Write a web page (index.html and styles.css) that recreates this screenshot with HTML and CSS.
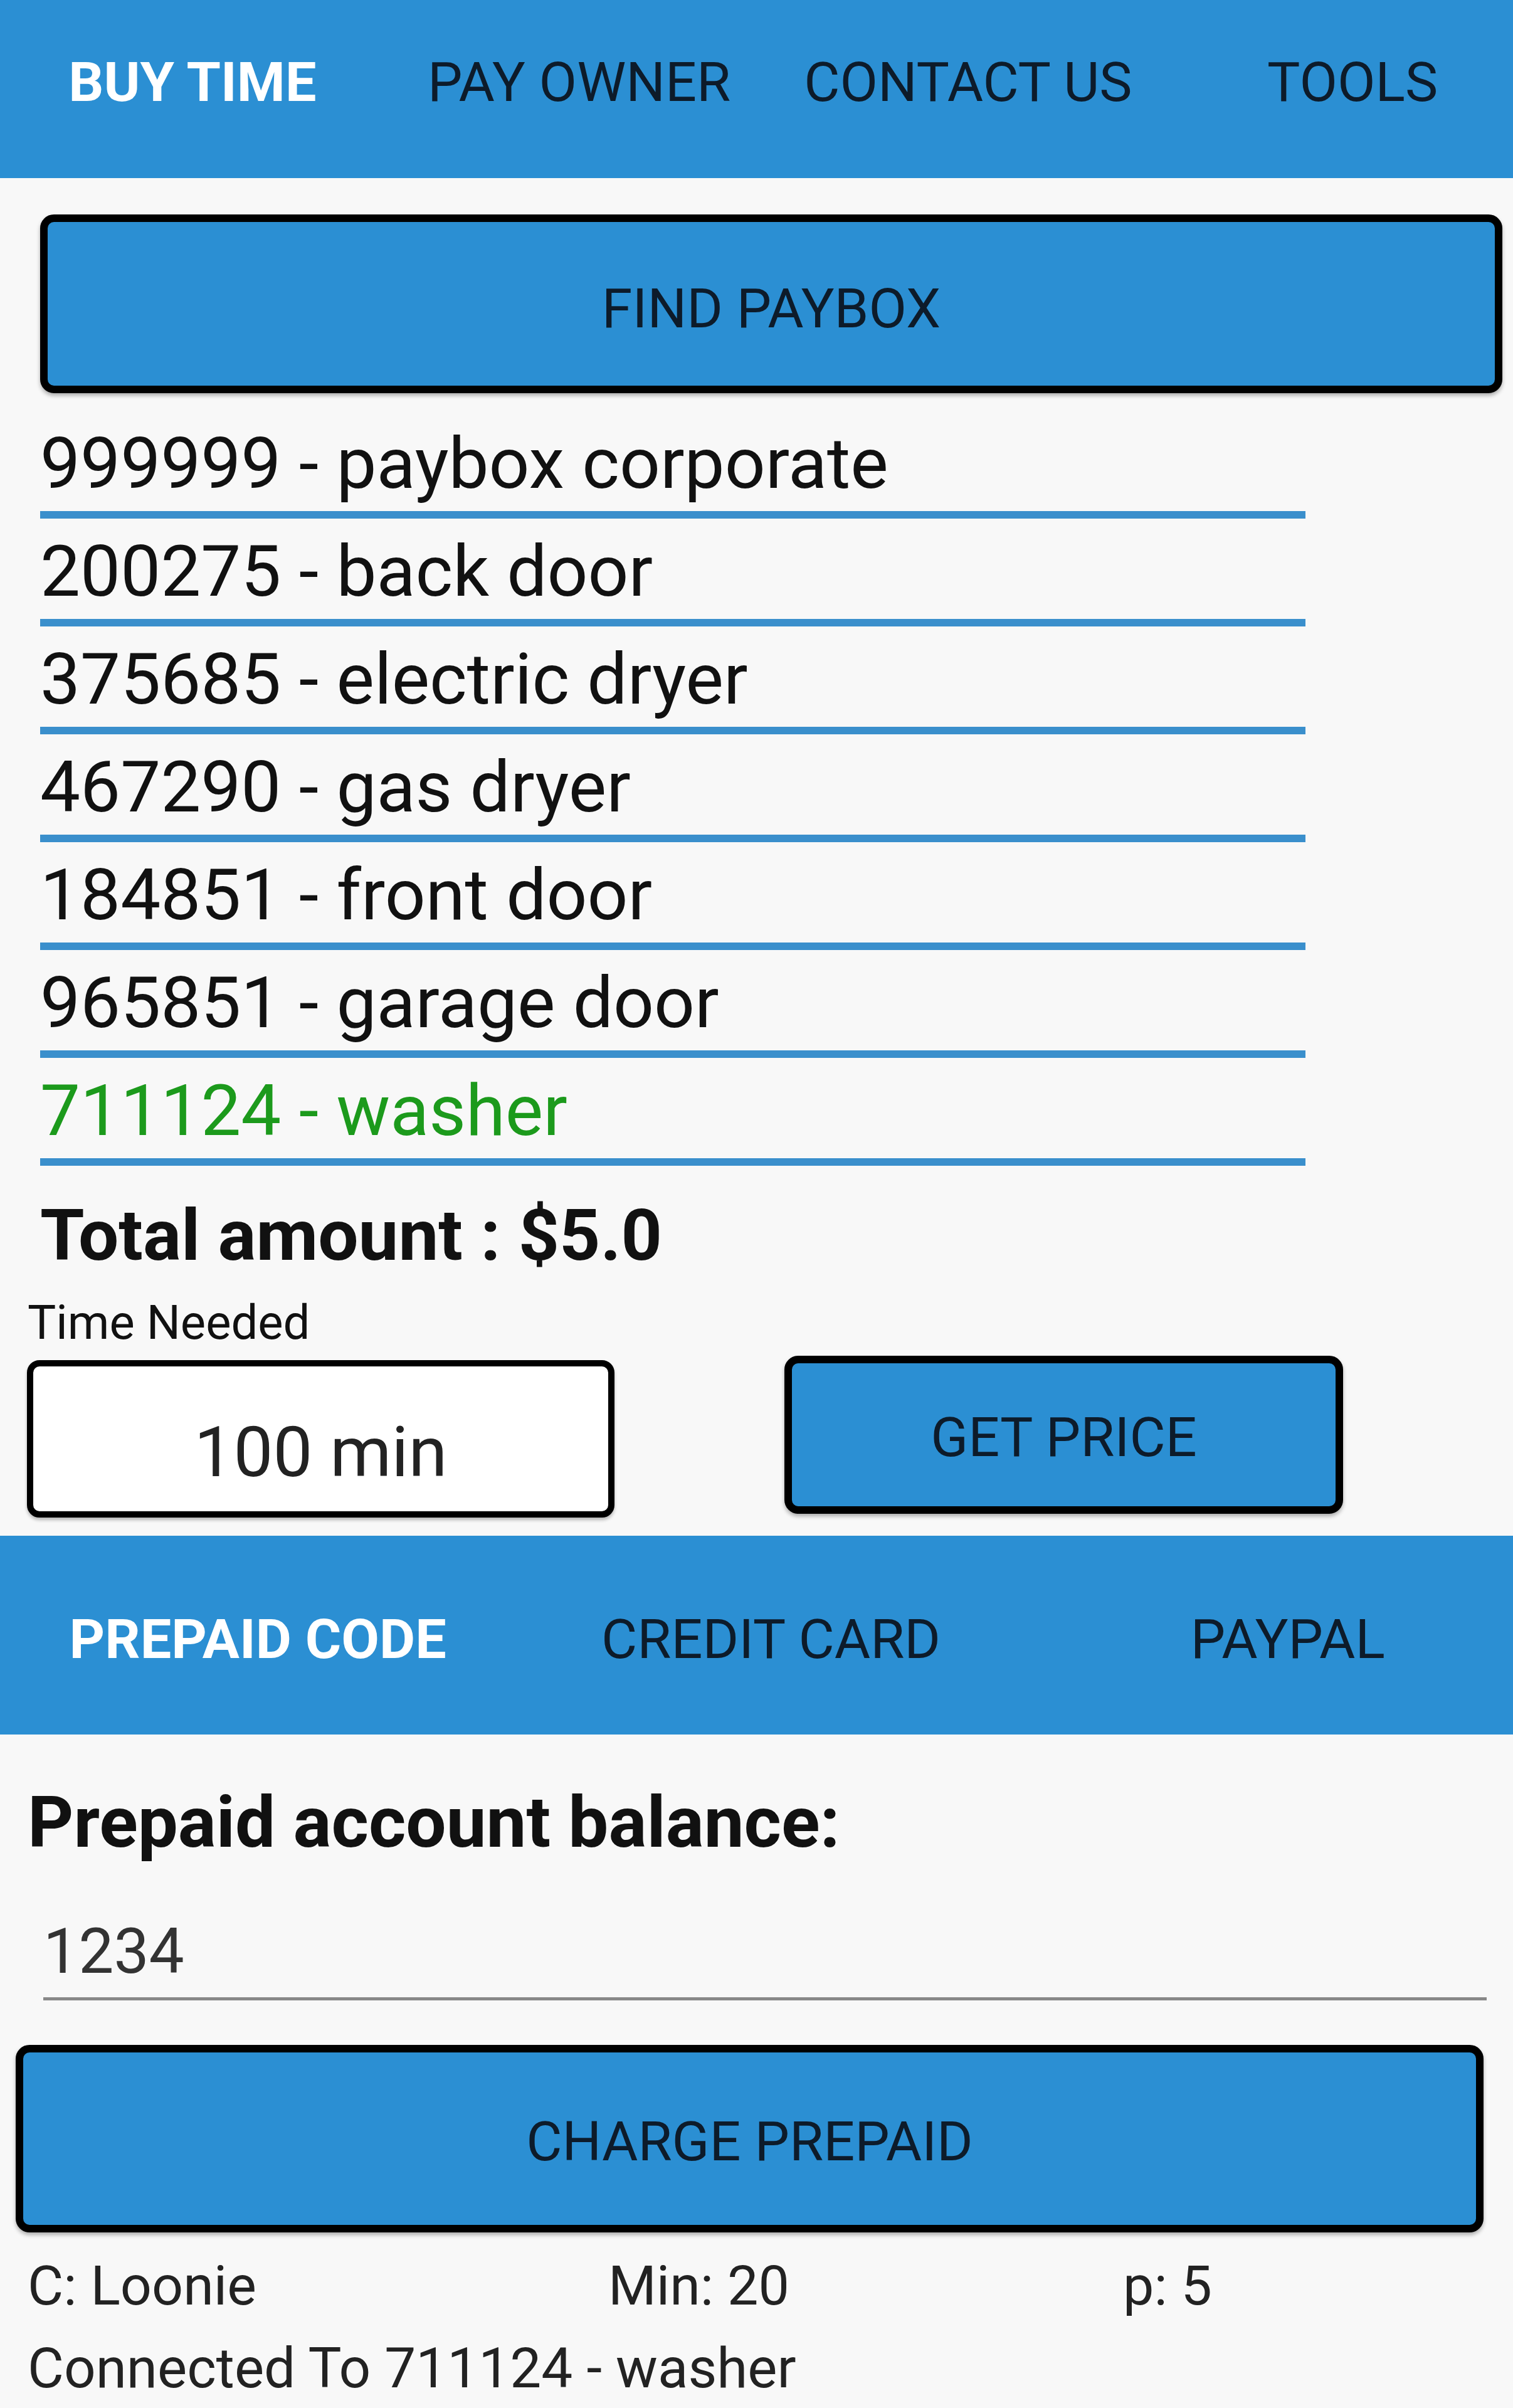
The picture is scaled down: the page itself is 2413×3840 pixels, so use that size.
FILE: index.html
```html
<!DOCTYPE html>
<html lang="en">
<head>
<meta charset="UTF-8">
<meta name="viewport" content="width=device-width, initial-scale=1.0">
<title>Paybox - Buy Time</title>
<link rel="stylesheet" href="styles.css">
</head>
<body>

<div class="tabs top-tabs">
    <div class="tab active">BUY TIME</div>
    <div class="tab">PAY OWNER</div>
    <div class="tab">CONTACT US</div>
    <div class="tab">TOOLS</div>
</div>

<button class="big-btn find-btn">FIND PAYBOX</button>

<ul class="paybox-list">
    <li>999999 - paybox corporate</li>
    <li>200275 - back door</li>
    <li>375685 - electric dryer</li>
    <li>467290 - gas dryer</li>
    <li>184851 - front door</li>
    <li>965851 - garage door</li>
    <li class="selected">711124 - washer</li>
</ul>

<div class="total">Total amount : $5.0</div>
<div class="time-label">Time Needed</div>

<div class="price-row">
    <div class="time-box">100 min</div>
    <button class="big-btn price-btn">GET PRICE</button>
</div>

<div class="tabs pay-tabs">
    <div class="tab active">PREPAID CODE</div>
    <div class="tab">CREDIT CARD</div>
    <div class="tab">PAYPAL</div>
</div>

<div class="balance">Prepaid account balance:</div>
<div class="code-input">1234</div>

<button class="big-btn charge-btn">CHARGE PREPAID</button>

<div class="status-row">
    <span>C: Loonie</span>
    <span>Min: 20</span>
    <span>p: 5</span>
</div>
<div class="connected">Connected To 711124 - washer</div>

</body>
</html>
```

FILE: styles.css
```css
/* Paybox buy time screen */
body {
    font-family: Roboto, "Noto Sans", Arial, sans-serif;
    background-color: #f8f8f8;
    color: #111;
    margin: 0;
    padding: 0;
}

/* tab bars */
.tabs {
    display: grid;
    background-color: #2b8fd3;
    color: #0d1b2a;
    font-size: 88px;
    text-align: center;
}

.tab.active {
    color: #fff;
    font-weight: bold;
}

.top-tabs {
    grid-template-columns: repeat(4, 1fr);
    height: 284px;
    line-height: 262px;
    padding-left: 6px;
    padding-right: 0;
    box-sizing: border-box;
}

.top-tabs .tab:nth-child(2) {
    padding-left: 30px;
}

.top-tabs .tab:nth-child(3) {
    padding-left: 67px;
}

.top-tabs .tab:nth-child(4) {
    padding-left: 90px;
}

.pay-tabs {
    grid-template-columns: repeat(3, 1fr);
    height: 317px;
    margin-top: 29px;
    padding-top: 13px;
    line-height: 304px;
    box-sizing: border-box;
}

.pay-tabs .tab:nth-child(1) {
    padding-left: 18px;
}

.pay-tabs .tab:nth-child(2) {
    padding-left: 46px;
}

.pay-tabs .tab:nth-child(3) {
    padding-left: 86px;
}

/* blue buttons */
.big-btn {
    display: block;
    box-sizing: border-box;
    background-color: #2b8fd3;
    color: #0d1b2a;
    font-family: inherit;
    font-size: 88px;
    border: 12px solid #000;
    border-radius: 22px;
    box-shadow: 0 4px 6px rgba(0, 0, 0, 0.3);
    cursor: pointer;
    text-align: center;
}

.find-btn {
    width: 2332px;
    height: 285px;
    margin: 58px 0 0 64px;
    padding: 14px 0 0;
    line-height: 247px;
}

.paybox-list {
    list-style: none;
    margin: 28px 0 0 64px;
    padding: 0;
    width: 2018px;
}

.paybox-list li {
    font-size: 114px;
    line-height: 140px;
    padding: 14px 0 6px;
    border-bottom: 12px solid #3a8fcc;
}

.paybox-list li.selected {
    color: #1c9a1c;
}

.total {
    font-size: 114px;
    font-weight: bold;
    line-height: 134px;
    margin: 44px 0 0 64px;
}

.time-label {
    font-size: 76px;
    line-height: 84px;
    margin: 30px 0 0 44px;
}

.price-row {
    display: flex;
    align-items: flex-start;
    gap: 271px;
    margin: 11px 0 0 43px;
}

.time-box {
    box-sizing: border-box;
    width: 937px;
    height: 251px;
    margin-top: 7px;
    padding-top: 43px;
    background-color: #fff;
    border: 10px solid #000;
    border-radius: 20px;
    box-shadow: 0 4px 5px rgba(0, 0, 0, 0.25);
    font-size: 112px;
    line-height: 188px;
    text-align: center;
    color: #222;
}

.price-btn {
    width: 891px;
    height: 252px;
    padding: 8px 0 0;
    line-height: 220px;
}

.balance {
    font-size: 114px;
    font-weight: bold;
    line-height: 134px;
    margin: 73px 0 0 44px;
}

.code-input {
    font-size: 100px;
    line-height: 120px;
    color: #333;
    margin: 79px 42px 0 69px;
    padding-bottom: 13px;
    border-bottom: 5px solid #888;
}

.charge-btn {
    width: 2341px;
    height: 299px;
    margin: 71px 0 0 25px;
    padding: 9px 0 0;
    line-height: 266px;
}

.status-row {
    display: grid;
    grid-template-columns: 926px 821px 1fr;
    font-size: 88px;
    line-height: 104px;
    margin: 33px 0 0 44px;
    color: #222;
}

.connected {
    font-size: 89px;
    line-height: 104px;
    margin: 28px 0 0 44px;
    color: #222;
}
```
